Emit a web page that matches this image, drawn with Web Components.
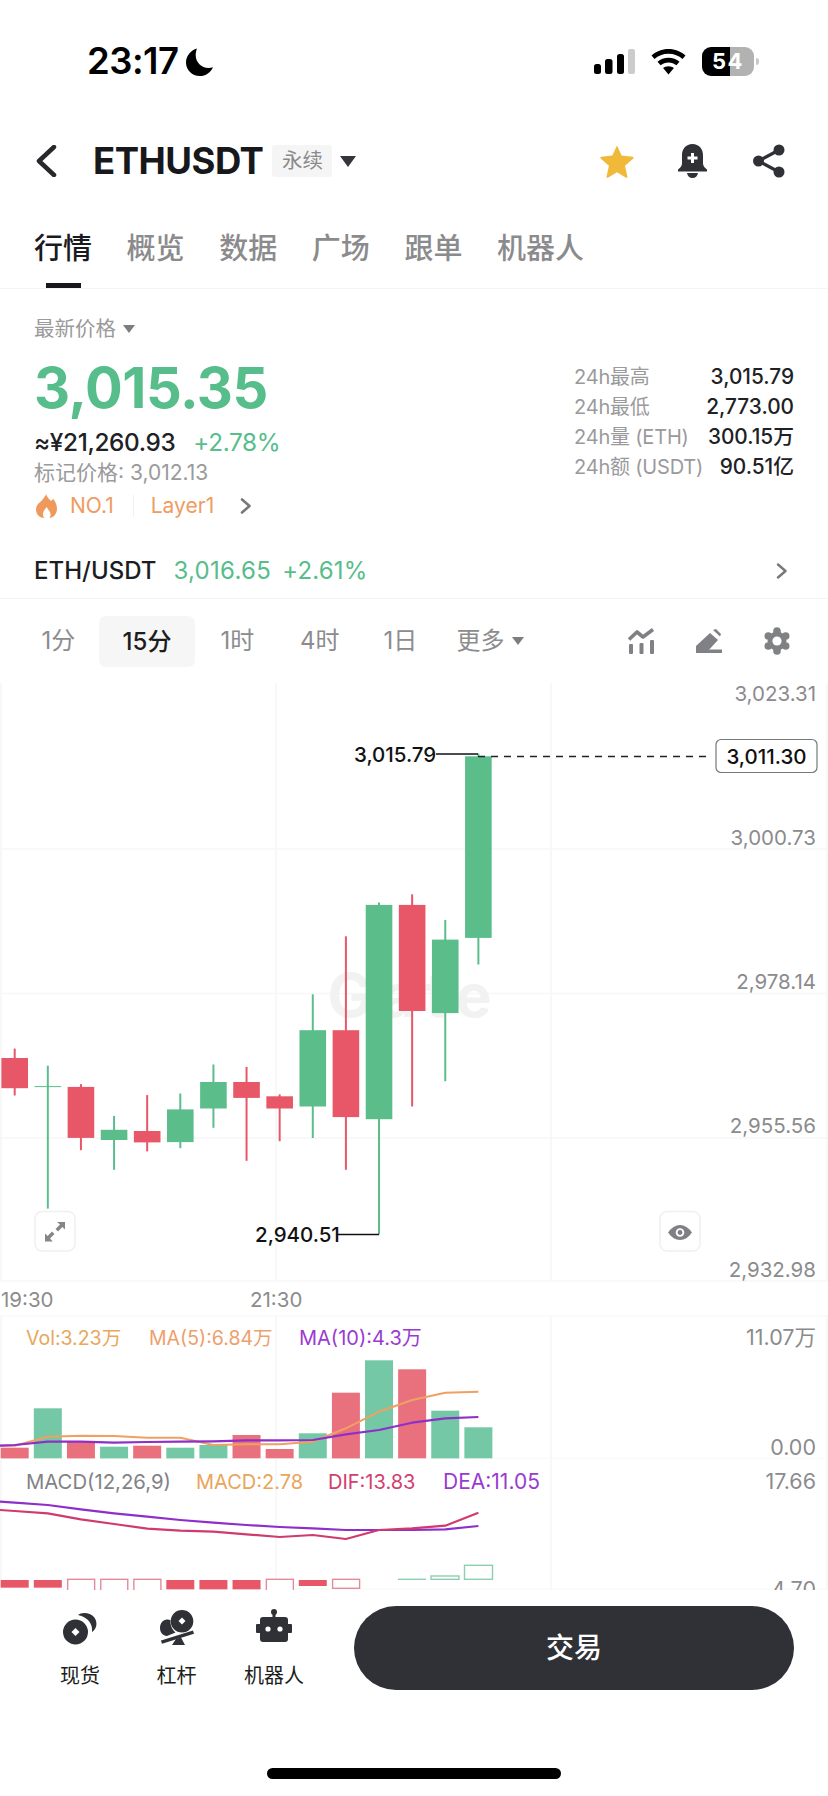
<!DOCTYPE html>
<html lang="zh"><head><meta charset="utf-8">
<style>
html,body{margin:0;padding:0;background:#fff}
body{width:828px;height:1796px;overflow:hidden;font-family:Inter,"Noto Sans CJK SC",sans-serif;color:#1c1d20;-webkit-font-smoothing:antialiased}
</style></head><body>
<status-bar></status-bar>
<nav-bar></nav-bar>
<tab-strip></tab-strip>
<ticker-panel></ticker-panel>
<pair-row></pair-row>
<interval-bar></interval-bar>
<kline-chart></kline-chart>
<action-bar></action-bar>
<home-bar></home-bar>
<script>
const FONT='Inter,"Noto Sans CJK SC",sans-serif';
function def(name,html){customElements.define(name,class extends HTMLElement{constructor(){super();this.attachShadow({mode:'open'}).innerHTML=html}})}

def('status-bar',`<style>
:host{display:flex;box-sizing:border-box;height:110px;padding:46px 69px 0 87px;justify-content:space-between;align-items:flex-start}
.l{display:flex;align-items:center;gap:7px;height:31px}
.t{font:600 36.500px/31px ${FONT};color:#000;letter-spacing:-.5px}
.r{display:flex;align-items:center;height:31px}
.bat{position:relative;width:52px;height:29px;border-radius:9px;margin-left:16px;background:linear-gradient(90deg,#000 0 28px,#b2b2b2 28px);display:flex;align-items:center;justify-content:center;font:700 22px/29px ${FONT};color:#fff;letter-spacing:1.500px}
.nub{width:3px;height:7px;background:#c8c8c8;border-radius:0 3px 3px 0;margin-left:2px}
svg{display:block}
</style>
<div class="l"><span class="t">23:17</span>
<svg width="28" height="28" viewBox="0 0 28 28"><path d="M11 .5C4.600 2.300 0 8 0 14.500 0 22 6.100 28 13.800 28c5.900 0 11.100-3.600 13.200-8.800-1.400.5-2.900.8-4.500.8C15.400 20 9.700 14.300 9.700 7.300c0-2.500.5-4.700 1.300-6.800z" fill="#000"/></svg></div>
<div class="r">
<svg width="41" height="25" viewBox="0 0 41 25"><rect x="0" y="15" width="7" height="10" rx="2.500"/><rect x="11" y="10" width="7.500" height="15" rx="2.500"/><rect x="23" y="5" width="7" height="20" rx="2.500"/><rect x="34" y="0" width="7" height="25" rx="2" fill="#ccc"/></svg>
<svg style="margin-left:16px" width="35" height="26" viewBox="0 0 35 26"><path d="M17.500 0C11 0 5 2.400.5 6.500l3 3.600C7.100 6.800 12 4.800 17.500 4.800s10.400 2 14 5.300l3-3.600C30 2.400 24 0 17.500 0z"/><path d="M17.500 8.700c-4.200 0-8 1.500-11 4.100l3.100 3.500c2.100-1.800 4.900-2.900 7.900-2.900s5.800 1.100 7.900 2.900l3.100-3.500c-3-2.600-6.800-4.100-11-4.100z"/><path d="M17.500 17.200c-2.100 0-3.900.7-5.400 1.900l5.400 6.300 5.400-6.300c-1.500-1.200-3.300-1.900-5.400-1.900z"/></svg>
<div class="bat">54</div><div class="nub"></div>
</div>`);

def('nav-bar',`<style>
:host{display:flex;box-sizing:border-box;height:100px;align-items:center;padding:2px 0 0 35px}
svg{display:block;flex:none}
.n{font:700 36.500px/40px ${FONT};color:#17181b;margin-left:36px;letter-spacing:-.5px}
.tag{margin-left:9px;width:60px;height:32px;background:#f5f5f5;border-radius:3px;font:400 20.500px/32px ${FONT};color:#8a8a8a;text-align:center}
.tri{margin-left:8px}
.sp{flex:1}
</style>
<svg width="22" height="32" viewBox="0 0 22 32"><path d="M19 2L4 16l15 14" fill="none" stroke="#26282c" stroke-width="4.500" stroke-linecap="round" stroke-linejoin="round"/></svg>
<span class="n">ETHUSDT</span><span class="tag">永续</span>
<svg class="tri" width="16" height="11" viewBox="0 0 16 11"><path d="M0 0h16L8 11z" fill="#33363b"/></svg>
<span class="sp"></span>
<svg width="36" height="34" viewBox="0 0 36 34"><path d="M18 1.500l4.600 10.100 11.100 1.200c.8.100 1.100 1 .6 1.600l-8.300 7.400 2.400 10.900c.2.800-.7 1.400-1.400 1L18 28.300 8.900 33.700c-.7.400-1.600-.2-1.400-1l2.400-10.900-8.300-7.400c-.5-.6-.2-1.500.6-1.600l11.100-1.200z" fill="#f0b93a"/></svg>
<svg style="margin-left:42px" width="31" height="34" viewBox="0 0 31 34"><path d="M15.500 0C8.800 0 5 5 5 11v8.500C5 22 3 24 1 25.500V27.500h29v-2c-2-1.500-4-3.500-4-6V11C26 5 22.200 0 15.500 0z" fill="#2f3136"/><path d="M10 29h11c-.5 3-2.500 5-5.500 5S10.500 32 10 29z" fill="#2f3136"/><path d="M15.500 9v10M10.500 14h10" stroke="#fff" stroke-width="3"/></svg>
<svg style="margin-left:45px;margin-right:43px" width="32" height="34" viewBox="0 0 32 34"><circle cx="26" cy="6" r="5.500" fill="#2f3136"/><circle cx="26" cy="28" r="5.500" fill="#2f3136"/><circle cx="5.500" cy="17" r="5.500" fill="#2f3136"/><path d="M26 6L5.500 17 26 28" fill="none" stroke="#2f3136" stroke-width="3.200"/></svg>`);

def('tab-strip',`<style>
:host{display:flex;box-sizing:border-box;height:79px;gap:34.600px;padding:21px 0 0 34px;border-bottom:1px solid #f4f4f4;position:relative;font:500 29px/36px ${FONT};color:#8b8b8d}
.a{color:#1a1b1e}
.u{position:absolute;left:46px;bottom:0;width:35px;height:5px;background:#17181b}
</style><span class="a">行情</span><span>概览</span><span>数据</span><span>广场</span><span>跟单</span><span>机器人</span><i class="u"></i>`);

def('ticker-panel',`<style>
:host{display:flex;box-sizing:border-box;height:232px;padding:0 34px;justify-content:space-between}
.lab{display:flex;align-items:center;gap:7px;height:26px;margin-top:27px;font:400 20.500px/26px ${FONT};color:#9a9a9c}
.pr{font:700 56px/64px ${FONT};color:#56bd8b;margin-top:14px;letter-spacing:-.5px}
.sub{display:flex;gap:18px;font:500 24.300px/32px ${FONT};color:#202125;margin-top:6px;letter-spacing:-.35px}
.sub b{font-weight:400;color:#56bd8b}
.mk{font:400 21px/28px ${FONT};color:#9a9a9c;margin-top:1px}
.tg{display:flex;align-items:center;height:30px;margin-top:4px;font:400 21px/30px ${FONT};color:#ee9c60}
.tg i{width:1px;height:22px;background:#f0f0f0;margin:0 17px 0 19px}
.st{display:grid;grid-template-columns:1fr auto;width:220px;align-content:start;grid-auto-rows:30px;margin-top:73px;font:400 20px/30px ${FONT}}
.st span{color:#9a9a9c;letter-spacing:-.2px}.st b{font:500 20.800px/30px ${FONT};color:#202125;text-align:right}
svg{display:block;flex:none}
</style>
<div>
<div class="lab">最新价格<svg width="12" height="8" viewBox="0 0 12 8"><path d="M0 0h12L6 8z" fill="#7d7d80"/></svg></div>
<div class="pr">3,015.35</div>
<div class="sub"><span>≈¥21,260.93</span><b>+2.78%</b></div>
<div class="mk">标记价格: 3,012.13</div>
<div class="tg"><svg style="margin:0 13px 0 2px" width="21" height="24" viewBox="0 0 21 24"><path d="M10 0C11 3 13 5 15 7C16 6 17 5.500 17.500 5C19.500 8 21 11 21 15C21 20 17 24 13.500 24C15 22 15 19 13 16.500C12 15 11 14 10.500 13C9.500 15 7 17 7 20C7 22 7.500 23 8.500 24C4 24 0 20.500 0 15.500C0 10 5 8 7 5C8.500 3 10 1.500 10 0z" fill="#ef9a5c"/></svg><span>NO.1</span><i></i><span>Layer1</span>
<svg style="margin-left:26px" width="12" height="16" viewBox="0 0 12 16"><path d="M2 1.500L9.500 8 2 14.500" fill="none" stroke="#77787b" stroke-width="2.600" stroke-linecap="round" stroke-linejoin="round"/></svg></div>
</div>
<div class="st"><span>24h最高</span><b>3,015.79</b><span>24h最低</span><b>2,773.00</b><span>24h量 (ETH)</span><b>300.15万</b><span>24h额 (USDT)</span><b>90.51亿</b></div>`);

def('pair-row',`<style>
:host{display:flex;box-sizing:border-box;height:78px;align-items:center;padding:22px 40px 0 34px;border-bottom:1px solid #f4f4f4;font:400 24px/30px ${FONT}}
.n{font-weight:500;color:#1c1d20}
.p{color:#56bd8b;margin-left:17px;letter-spacing:.3px}.q{color:#56bd8b;margin-left:11px;letter-spacing:.2px}
.sp{flex:1}
</style><span class="n">ETH/USDT</span><span class="p">3,016.65</span><span class="q">+2.61%</span><span class="sp"></span>
<svg width="12" height="16" viewBox="0 0 12 16"><path d="M2 1.500L9.500 8 2 14.500" fill="none" stroke="#77787b" stroke-width="2.400" stroke-linecap="round" stroke-linejoin="round"/></svg>`);

def('interval-bar',`<style>
:host{display:flex;box-sizing:border-box;height:76px;align-items:center;padding:8px 38px 0 0;font:400 24px/32px ${FONT};color:#8c8c8e;position:relative}
span{display:block;flex:none;text-align:center;white-space:nowrap}
.a{width:96px;height:51px;line-height:51px;background:#f6f6f6;border-radius:7px;color:#1c1d20;font-weight:500;margin-left:23px}
svg{display:block;flex:none}
.sp{flex:1}
</style>
<span style="width:35px;margin-left:41px">1分</span><span class="a">15分</span>
<span style="margin-left:24px;width:37px">1时</span><span style="margin-left:44px;width:37px">4时</span><span style="margin-left:46px;width:35px">1日</span><span style="margin-left:38px;width:49px">更多</span>
<svg style="margin-left:7px" width="12" height="8" viewBox="0 0 12 8"><path d="M0 0h12L6 8z" fill="#7d7d80"/></svg>
<span class="sp"></span>
<svg width="27" height="26" viewBox="0 0 27 26"><path d="M1 11.500L9 4l6 5L25 1.500" fill="none" stroke="#808184" stroke-width="3.600" stroke-linejoin="round"/><rect x="1" y="16" width="4" height="10" rx="1" fill="#808184"/><rect x="11.500" y="15" width="4" height="11" rx="1" fill="#808184"/><rect x="22" y="12" width="4" height="14" rx="1" fill="#808184"/></svg>
<svg style="margin-left:41px" width="26" height="26" viewBox="0 0 26 26"><path d="M0 25L0 18 14 5 22 12 10 25z" fill="#808184"/><path d="M17 2L20 1 25 6 24 8.500z" fill="#808184"/><rect x="10" y="21.500" width="16" height="3.500" fill="#808184"/></svg>
<svg style="margin-left:42px" width="26" height="28" viewBox="0 0 26 28"><g fill="#808184"><circle cx="13" cy="14" r="9.500"/><circle cx="13" cy="4" r="3.800"/><circle cx="13" cy="24" r="3.800"/><circle cx="21.700" cy="9" r="3.800"/><circle cx="21.700" cy="19" r="3.800"/><circle cx="4.300" cy="9" r="3.800"/><circle cx="4.300" cy="19" r="3.800"/></g><circle cx="13" cy="14" r="4.600" fill="#fff"/></svg>`);

customElements.define('kline-chart',class extends HTMLElement{
 constructor(){super();const r=this.attachShadow({mode:'open'});
 const cx=i=>14.7+33.12*i, Y=z=>680+z/2.45, V=z=>1300+z/3;
 const G='#5abd8a',R='#e75767';
 const c=[['r',926,1000,903,1018],['g',995,996,945,1295],['r',997,1122,990,1152],['g',1102,1127,1068,1200],['r',1105,1133,1017,1155],['g',1052,1132,1013,1147],['g',985,1050,942,1097],['r',985,1024,948,1178],['r',1020,1050,1015,1130],['g',858,1045,770,1122],['r',858,1071,628,1200],['g',551,1076,545,1358],['r',551,811,525,1045],['g',636,816,588,983],['g',187,632,180,697]];
 const top=675; let s='';
 const y=v=>(v-top).toFixed(1);
 for(const x of [1,276,551,827]) { s+=`<path d="M${x} 8V606M${x} 640V915" stroke="#f8f8f8" stroke-width="2"/>`; }
 for(const g of [849,993.5,1138,1281]) s+=`<path d="M0 ${y(g)}H828" stroke="#f7f7f7" stroke-width="1.500"/>`;
 s+=`<path d="M0 ${y(1316)}H828" stroke="#f8f8f8" stroke-width="1.500"/><path d="M0 ${y(1458.500)}H828" stroke="#f9f9f9"/><path d="M0 914H828" stroke="#f7f7f7"/>`;
 s+=`<text x="414" y="${y(1017)}" text-anchor="middle" font-size="60" letter-spacing="9" font-weight="700" fill="#f2f2f3" font-family='Inter,sans-serif'>Gate</text>`;
 c.forEach((d,i)=>{const col=d[0]=='g'?G:R,x=cx(i);
  s+=`<path d="M${x} ${y(Y(d[3]))}V${y(Y(d[4]))}" stroke="${col}" stroke-width="2"/>`;
  const h=Y(d[2])-Y(d[1]);
  s+=`<rect x="${x-13.300}" y="${y(Y(d[1]))}" width="26.600" height="${Math.max(h,1).toFixed(1)}" fill="${col}"/>`;});
 const T=(x,yy,t,a,col,fs,w)=>`<text x="${x}" y="${y(yy)}" text-anchor="${a||'start'}" fill="${col||'#8b8b8d'}" font-size="${fs||20.500}" font-weight="${w||400}" font-family='${FONT}'>${t}</text>`;
 s+=T(354,762,'3,015.79','start','#111',20.500,500)+`<path d="M436 ${y(754)}H478" stroke="#111" stroke-width="1.600"/>`;
 s+=T(255,1242,'2,940.51','start','#111',20.500,500)+`<path d="M337 ${y(1234.500)}H379" stroke="#111" stroke-width="1.600"/>`;
 s+=`<path d="M478 ${y(756.500)}H712" stroke="#222" stroke-width="1.400" stroke-dasharray="7 6"/>`;
 s+=`<rect x="716" y="${y(739.500)}" width="101" height="33" rx="5" fill="#fff" stroke="#77787b" stroke-width="1.200"/>`;
 s+=T(766.500,763.500,'3,011.30','middle','#111',20.500,500);
 [['3,023.31',701],['3,000.73',845],['2,978.14',989],['2,955.56',1133],['2,932.98',1277]].forEach(a=>s+=T(816,a[1],a[0],'end'));
 s+=T(1,1307,'19:30')+T(250,1307,'21:30');
 const btn=(x)=>`<rect x="${x}" y="${y(1211.500)}" width="40" height="39.500" rx="7" fill="#fff" stroke="#f0f0f0" stroke-width="1.500"/>`;
 s+=btn(35)+btn(660);
 s+=`<g transform="translate(45 ${y(1222)})" fill="#85868a"><path d="M12 0H20V7.500L17.400 5 13 9.500 10.500 7 15 2.500z"/><path d="M0 19.500V11.500L2.600 14 7 9.500 9.500 12 5 16.500 7.800 19.500z"/></g>`;
 s+=`<g transform="translate(668 ${y(1225)})"><path d="M0 7.500C3.500 2.500 7.500 0 12 0s8.500 2.500 12 7.500C20.500 12.500 16.500 15 12 15S3.500 12.500 0 7.500z" fill="#7f8084"/><circle cx="12" cy="7.500" r="4.300" fill="#fff"/><circle cx="12" cy="7.500" r="2.400" fill="#7f8084"/></g>`;
 const vt=[443,325,425,440,437,443,435,405,447,400,278,181,208,332,382];
 vt.forEach((t,i)=>{const col=c[i][0]=='g'?'#74c8a5':'#e9717e';const h=(475-t)/3;s+=`<rect x="${cx(i)-14}" y="${y(V(t))}" width="28" height="${h.toFixed(1)}" fill="${col}"/>`});
 const pl=(pts,col,w)=>`<polyline fill="none" stroke="${col}" stroke-width="${w||2}" stroke-linejoin="round" points="${pts.map(p=>p[0].toFixed(1)+','+y(V(p[1]))).join(' ')}"/>`;
 const ser=a=>a.map((v,i)=>[i==0?0:cx(i-1),v]);
 s+=pl(ser([437,437,410,407,408,413,413,435,433,433,425,385,335,300,278,275]),'#f0a060');
 s+=pl(ser([437,435,425,425,428,426,425,424,421,421,420,403,390,368,355,351]),'#8e2fc9',2.200);
 s+=pl(ser([605,608,615,628,640,650,660,668,675,681,685,690,690,690,688,678]),'#8e2fc9',2.200);
 s+=pl(ser([630,633,640,658,672,686,692,695,703,711,705,717,690,685,677,638]),'#cf3a6f',2.200);
 const L=(x,yy,t,col,fs)=>T(x,yy,t,'start',col,fs||19.500);
 s+=L(26,1345,'Vol:3.23万','#e6a85c')+L(149,1345,'MA(5):6.84万','#ee9f6c')+L(299,1345,'MA(10):4.3万','#9a3bd0',20);
 s+=L(26,1489,'MACD(12,26,9)','#818286',20.300)+L(196,1489,'MACD:2.78','#e9a55a',20)+L(328,1489,'DIF:13.83','#d0406f',20)+L(443,1489,'DEA:11.05','#9a3bd0',21);
 s+=T(816,1345,'11.07万','end',undefined,21.500)+T(816,1455,'0.00','end',undefined,21.500)+T(816,1489,'17.66','end',undefined,21.500);
 s+=T(816,1597,'4.70','end',undefined,21.500);
 const base=V(838);
 const m=[[1,840,863],[1,840,863],[0,838,880],[0,838,880],[0,838,880],[1,840,868],[1,840,868],[1,840,868],[0,838,880],[1,840,858],[0,838,865]];
 m.forEach((d,i)=>{const x=cx(i)-14;
  if(d[0]) s+=`<rect x="${x}" y="${y(V(d[1]))}" width="28" height="${(d[2]-d[1])/3}" fill="#e75767"/>`;
  else s+=`<rect x="${x+.7}" y="${y(V(d[1]))}" width="27" height="${(d[2]-d[1])/3}" fill="#fff" stroke="#e58a98" stroke-width="1.400"/>`;});
 s+=`<path d="M398 ${y(base)}H426" stroke="#8ccfb0" stroke-width="1.400"/>`;
 s+=`<rect x="431" y="${y(V(828))}" width="28" height="3.300" fill="#fff" stroke="#8ccfb0" stroke-width="1.400"/>`;
 s+=`<rect x="464.500" y="${y(V(796))}" width="28" height="14" fill="#fff" stroke="#8ccfb0" stroke-width="1.400"/>`;
 r.innerHTML=`<style>:host{display:block;height:915px;overflow:hidden}svg{display:block}</style><svg width="828" height="915" viewBox="0 0 828 915">${s}</svg>`;
 }});

def('tool-item',`<style>
:host{display:flex;flex-direction:column;align-items:center;font:400 20px/24px ${FONT};color:#1c1d20}
.i{height:55px;display:flex;align-items:flex-end;justify-content:center}
.l{margin-top:19px}
</style><div class="i"><slot name="icon"></slot></div><div class="l"><slot></slot></div>`);

def('action-bar',`<style>
:host{display:flex;box-sizing:border-box;height:178px;padding:16px 34px 0 0;align-items:flex-start;position:relative}
.tools{display:flex;width:354px;flex:none;height:84px}
.btn{flex:1;height:84px;border-radius:42px;background:#2f3136;color:#fff;font:500 28px/84px ${FONT};text-align:center}
tool-item{position:absolute;top:0}
</style>
<tool-item style="left:60px;width:40px"><svg slot="icon" width="35" height="33" viewBox="0 0 35 33"><path fill-rule="evenodd" d="M12.500 7.500a12.500 12.500 0 1 1 0 25 12.500 12.500 0 0 1 0-25zm0 8.500l-4 4 4 4 4-4z" fill="#2f3136"/><path d="M15 3C18 0 27 0 31 5C35 10 34 17 29 20C30 12 25 5 15 3z" fill="#2f3136"/></svg>现货</tool-item>
<tool-item style="left:156px;width:41px"><svg slot="icon" width="36" height="35" viewBox="0 0 36 35"><path fill-rule="evenodd" d="M23 0a11.300 11.300 0 1 1 0 22.600A11.300 11.300 0 0 1 23 0zm0 7.500l-3.500 3.500 3.500 3.500 3.500-3.500z" fill="#2f3136"/><path d="M8 9.500c1.500 0 2.500.2 3.500.7-.5 4.500 1.500 9.300 5 12.300L8 26C3 25.500 1 21.500 1 18c0-4.500 3-8.500 7-8.500z" fill="#2f3136"/><path d="M2 30.500L34 20.500l1 3.300L3 33.800z" fill="#2f3136"/><path d="M13 35l4-6 5-1.500 4 7.500z" fill="#2f3136"/></svg>杠杆</tool-item>
<tool-item style="left:243px;width:62px"><svg slot="icon" style="margin-bottom:3px" width="36" height="33" viewBox="0 0 36 33"><circle cx="18" cy="3" r="3" fill="#2f3136"/><rect x="16.500" y="4" width="3" height="5" fill="#2f3136"/><rect x="4" y="8" width="28" height="25" rx="3" fill="#2f3136"/><rect x="0" y="15" width="5" height="9" rx="1" fill="#2f3136"/><rect x="31" y="15" width="5" height="9" rx="1" fill="#2f3136"/><circle cx="12" cy="20" r="2.600" fill="#fff"/><circle cx="24" cy="20" r="2.600" fill="#fff"/></svg>机器人</tool-item>
<div class="tools"></div>
<div class="btn">交易</div>`);

def('home-bar',`<style>:host{display:flex;justify-content:center}i{display:block;width:294px;height:11px;border-radius:6px;background:#000}</style><i></i>`);
</script>
</body></html>
